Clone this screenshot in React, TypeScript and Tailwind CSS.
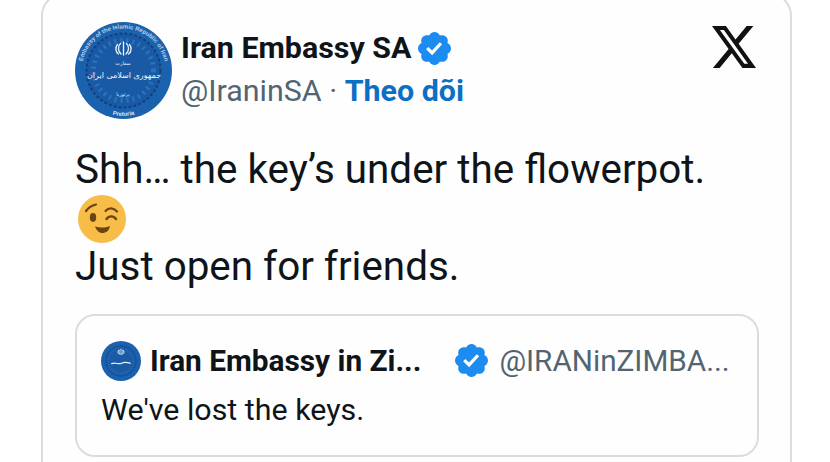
import React from 'react';

const BADGE =
  'M22.25 12c0-1.43-.88-2.67-2.19-3.34.46-1.39.2-2.9-.81-3.91s-2.52-1.27-3.91-.81c-.66-1.31-1.91-2.19-3.34-2.19s-2.67.88-3.33 2.19c-1.4-.46-2.91-.2-3.92.81s-1.26 2.52-.8 3.91c-1.31.67-2.2 1.91-2.2 3.34s.89 2.67 2.2 3.34c-.46 1.39-.21 2.9.8 3.91s2.52 1.26 3.91.81c.67 1.31 1.91 2.19 3.34 2.19s2.68-.88 3.34-2.19c1.39.45 2.9.2 3.91-.81s1.27-2.52.81-3.91c1.31-.67 2.19-1.91 2.19-3.34zm-11.71 4.2L6.8 12.46l1.41-1.42 2.26 2.26 4.8-5.23 1.47 1.36-6.2 6.77z';

const Badge = () => (
  <svg viewBox="1.75 1.75 20.5 20.5" className="h-[33px] w-[33px] shrink-0">
    <path d={BADGE} fill="#1d8cf0" />
  </svg>
);

// embassy seal
const Seal = ({ className, detail = true }: { className: string; detail?: boolean }) => (
  <svg viewBox="0 0 97 97" className={className}>
    <defs>
      <path id="ring-top" d="M6.5 48.5a42 42 0 0 1 84 0" />
      <path id="ring-bottom" d="M2 48.5a46.500 46.500 0 0 0 93 0" />
    </defs>
    <circle cx="48.500" cy="48.500" r="48.500" fill="#1b62ae" />
    <circle cx="48.500" cy="48.500" r="37" fill="#1a5aa5" stroke="#123f80" strokeWidth="2" strokeDasharray="3 2" />
    <circle cx="48.500" cy="48.500" r="30" fill="none" stroke="#2b73bd" strokeWidth="5" strokeDasharray="2 4" />
    {detail && (
      <g>
        <text fontFamily="'Liberation Sans', sans-serif" fontSize="6" fontWeight="700" fill="#b9cfe8" textAnchor="middle">
          <textPath href="#ring-top" startOffset="50%">
            Embassy of the Islamic Republic of Iran
          </textPath>
        </text>
        <text fontFamily="'Liberation Sans', sans-serif" fontSize="6" fontWeight="700" fill="#d7e4f3" textAnchor="middle" dy="-1">
          <textPath href="#ring-bottom" startOffset="50%">
            Pretoria
          </textPath>
        </text>
        <text x="48" y="43" fontFamily="'DejaVu Sans', sans-serif" fontSize="5" fill="#e8f0f9" textAnchor="middle">
          سفارت
        </text>
        <text x="49" y="56" fontFamily="'DejaVu Sans', sans-serif" fontSize="8" fill="#f2f6fb" textAnchor="middle">
          جمهوری اسلامی ایران
        </text>
        <text x="48" y="74" fontFamily="'DejaVu Sans', sans-serif" fontSize="5" fill="#d7e4f3" textAnchor="middle">
          پرتوریا
        </text>
      </g>
    )}
    <g fill="none" stroke="#eef3fa" strokeWidth={detail ? 1.3 : 2} strokeLinecap="round">
      <path d="M48.500 20v13" />
      <path d="M45.500 21.500c-2.500 2-3 7.500.5 10.500" />
      <path d="M51.500 21.500c2.500 2 3 7.500-.5 10.500" />
      <path d="M42.500 22.500c-2.500 3-2 7.500 1 9.500" />
      <path d="M54.500 22.500c2.500 3 2 7.500-1 9.500" />
    </g>
    {!detail && <path d="M26 55c10-4 16 3 24-1s14-2 21 0" fill="none" stroke="#e8f0f9" strokeWidth="3" strokeLinecap="round" />}
  </svg>
);

const XLogo = () => (
  <svg viewBox="1.254 2.250 21.573 19.500" preserveAspectRatio="none" className="mt-1 -translate-x-px h-[42px] w-[44px] shrink-0">
    <path
      fill="#111"
      d="M18.244 2.250h3.308l-7.227 8.260 8.502 11.240H16.170l-5.214-6.817L4.990 21.750H1.680l7.730-8.835L1.254 2.250H8.080l4.713 6.231zm-1.161 17.520h1.833L7.084 4.126H5.117z"
    />
  </svg>
);

const WinkEmoji = () => (
  <svg viewBox="0 0 48 48" className="h-12 w-12">
    <circle cx="24" cy="24" r="24" fill="#f7bd48" />
    <path d="M8 16c2.500-3.500 6-5.500 10-6.500" fill="none" stroke="#6b4413" strokeWidth="2.200" strokeLinecap="round" />
    <path d="M27.500 16c3-3.500 8-3.500 11.500.5" fill="none" stroke="#6b4413" strokeWidth="2.200" strokeLinecap="round" />
    <ellipse cx="15" cy="22.500" rx="3.200" ry="4.400" fill="#6b4413" />
    <path d="M28.500 24c2.500-3.500 7-3.500 9.500 0" fill="none" stroke="#6b4413" strokeWidth="2.400" strokeLinecap="round" />
    <path d="M17 31.500c5 1.500 10 1.500 15-.5-1 5-4 7-7.500 7s-6-2.500-7.500-6.500z" fill="#6b4413" />
  </svg>
);

const App: React.FC = () => {
  return (
    <div className="h-[462px] w-[830px] overflow-hidden bg-white font-['Roboto',sans-serif]">
      <div className="-mt-2 ml-[41px] h-[520px] w-[751px] rounded-[24px] border-2 border-[#dcdcde] bg-[#fefefe] pl-8 pr-[33px] pt-7">
        <div className="flex items-start">
          <Seal className="h-[97px] w-[97px] shrink-0" />
          <div className="ml-[9px] pt-[4px]">
            <div className="flex h-[44px] items-center gap-[7px]">
              <span className="text-[30.4px] font-bold leading-[44px] text-[#0f1419]">Iran Embassy SA</span>
              <Badge />
            </div>
            <div className="mt-[-1px] text-[30.4px] leading-[44px] text-[#536471]">
              @IraninSA <span className="text-[#536471]">·</span>{' '}
              <span className="font-bold text-[#0b6fc4]">Theo dõi</span>
            </div>
          </div>
          <div className="ml-auto">
            <XLogo />
          </div>
        </div>
        <div className="mt-[27px] text-[40.4px] leading-[48.5px] text-[#0f1419]">
          <p>Shh… the key’s under the flowerpot.</p>
          <div className="ml-[3px] flex h-[48.5px] items-start">
            <WinkEmoji />
          </div>
          <p>Just open for friends.</p>
        </div>
        <div className="mt-[22px] h-[143px] w-[684px] rounded-[20px] border-2 border-[#dcdcde] pl-[24px] pr-[20px] pt-[25px]">
          <div className="flex items-center whitespace-nowrap">
            <Seal className="h-10 w-10 shrink-0" detail={false} />
            <span className="ml-[9px] text-[29.8px] font-bold leading-[40px] text-[#0f1419]">Iran Embassy in Zi...</span>
            <div className="ml-[34px]">
              <Badge />
            </div>
            <span className="ml-[11px] text-[29.7px] leading-[40px] text-[#536471]">@IRANinZIMBA...</span>
          </div>
          <p className="mt-[10px] text-[30.4px] leading-[38px] text-[#0f1419]">We've lost the keys.</p>
        </div>
      </div>
    </div>
  );
};

export default App;
